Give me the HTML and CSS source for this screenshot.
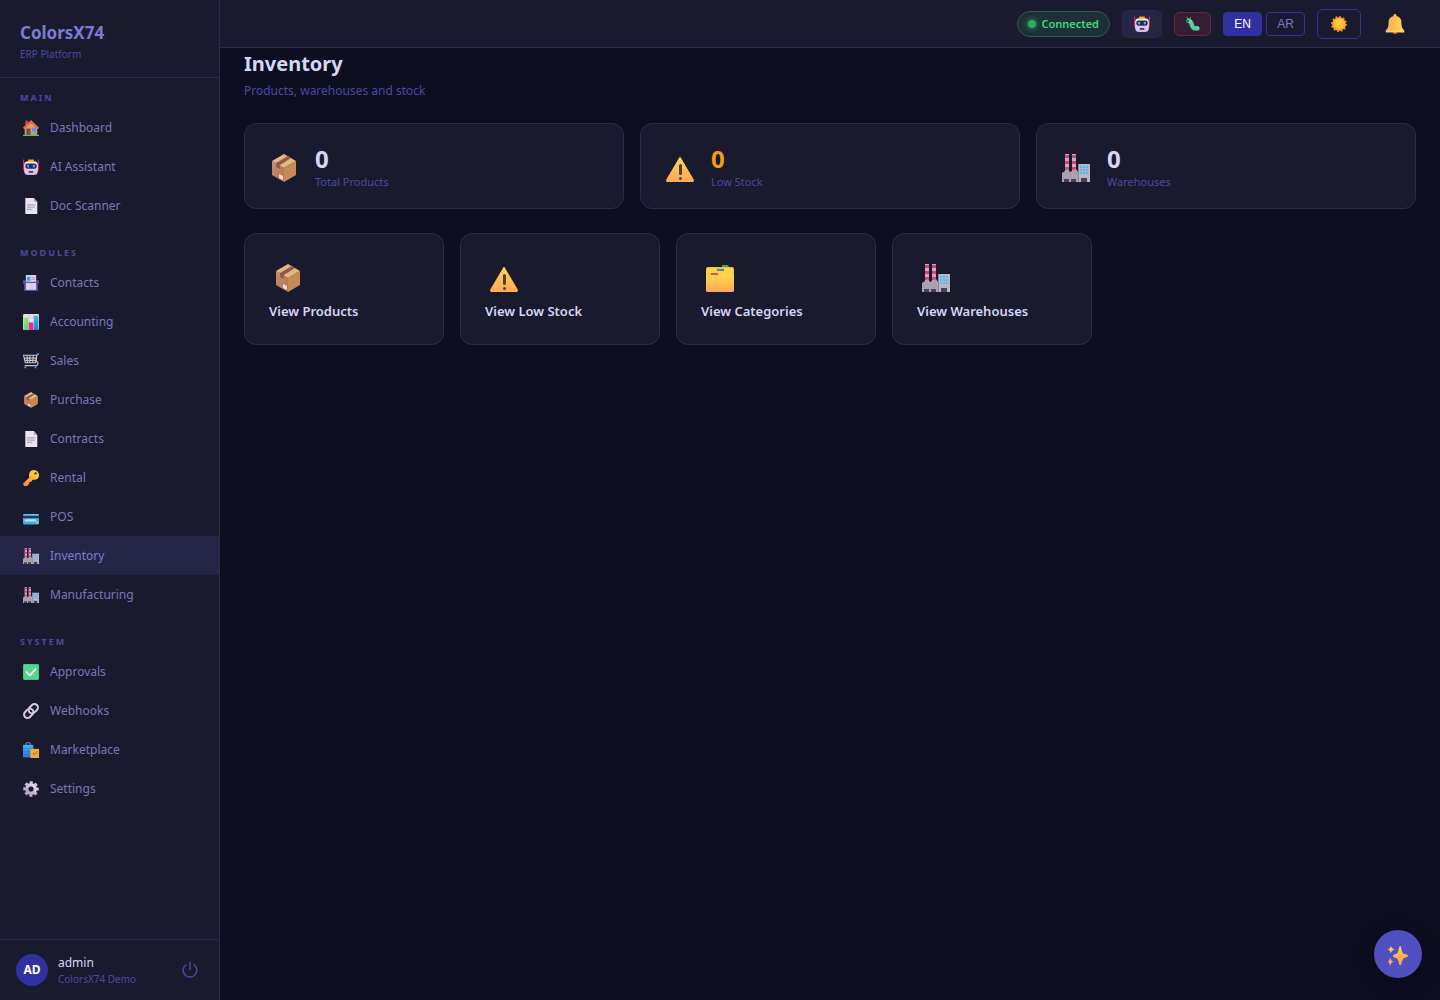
FILE: index.html
```html
<!DOCTYPE html>
<html lang="en">
<head>
<meta charset="utf-8">
<meta name="viewport" content="width=device-width, initial-scale=1">
<title>Inventory - ColorsX74</title>
<link rel="stylesheet" href="styles.css">
</head>
<body>
<svg class="sprite" aria-hidden="true">
  <defs>
    <linearGradient id="g-wall" x1="0" y1="0" x2="0" y2="1"><stop offset="0" stop-color="#dcb070"/><stop offset="1" stop-color="#c98e72"/></linearGradient>
    <linearGradient id="g-face" x1="0" y1="0" x2="0" y2="1"><stop offset="0" stop-color="#f4eef8"/><stop offset="1" stop-color="#d3b5ea"/></linearGradient>
    <linearGradient id="g-box" x1="0" y1="0" x2="1" y2="1"><stop offset="0" stop-color="#c78c72"/><stop offset="1" stop-color="#b97548"/></linearGradient>
    <linearGradient id="g-gold" x1="0" y1="0" x2="0" y2="1"><stop offset="0" stop-color="#ffd84f"/><stop offset="1" stop-color="#ffa757"/></linearGradient>
    <linearGradient id="g-key" x1="1" y1="0" x2="0" y2="1"><stop offset="0" stop-color="#ffe13c"/><stop offset="1" stop-color="#ff8148"/></linearGradient>
    <linearGradient id="g-bell" x1="0" y1="0" x2="1" y2="0"><stop offset="0" stop-color="#f9a85c"/><stop offset="1" stop-color="#ffd94c"/></linearGradient>
    <linearGradient id="g-blue" x1="0" y1="0" x2="0" y2="1"><stop offset="0" stop-color="#3db9ee"/><stop offset="1" stop-color="#2c78d8"/></linearGradient>
    <linearGradient id="g-green" x1="0" y1="0" x2="1" y2="1"><stop offset="0" stop-color="#a6e84c"/><stop offset="1" stop-color="#3ed59a"/></linearGradient>
    <linearGradient id="g-gear" x1="1" y1="0" x2="0" y2="1"><stop offset="0" stop-color="#e6e2ea"/><stop offset="1" stop-color="#b29bc6"/></linearGradient>
    <linearGradient id="g-spark" x1="0" y1="0" x2="0" y2="1"><stop offset="0" stop-color="#ffce4a"/><stop offset="1" stop-color="#ff9a63"/></linearGradient>
  </defs>
  <symbol id="i-house" viewBox="0 0 28 28">
    <path fill="#9b5a42" d="M4 1h5v9H4z"/><path fill="url(#g-wall)" d="M3 13 14 3l11 10v14H3z"/>
    <path fill="#f4643f" d="M14 0 0 13l2 3L14 6l12 10 2-3z"/><path fill="#7a4a48" d="M6 15h7v12H6z"/>
    <path fill="#31a5ef" d="M16 13h7v7h-7z"/><path fill="#45c96b" d="M0 26h28v2H0z"/>
  </symbol>
  <symbol id="i-robot" viewBox="0 0 28 28">
    <path fill="#e31f62" d="M0 1h2v8h3v12H2l-2-3zM28 1h-2v8h-3v12h3l2-3z"/>
    <rect x="2" y="4" width="24" height="24" rx="7" fill="url(#g-face)"/><path fill="#fbb51d" d="M9 1h10v4H9z"/>
    <rect x="4" y="8" width="20" height="9" rx="4" fill="#2d2552"/>
    <rect x="7" y="10" width="4" height="5" rx="2" fill="#2fb9f5"/><rect x="17" y="10" width="4" height="5" rx="2" fill="#2fb9f5"/>
    <rect x="10" y="21" width="8" height="3" rx="1" fill="#46385e"/>
  </symbol>
  <symbol id="i-doc" viewBox="0 0 28 28">
    <path fill="#ebe2f2" d="M4 0h15l6 7v21H4z"/><path fill="#b6a9c4" d="M19 0v7h6z"/>
    <path stroke="#b0a6ba" stroke-width="2" d="M7 12h14M7 16h14M7 20h9"/>
  </symbol>
  <symbol id="i-contacts" viewBox="0 0 28 28">
    <path fill="#6349a3" d="M0 9h28v6h-2v13H2V15H0z"/><path fill="#ddd2ea" d="M5 0h18v12H5z"/>
    <path fill="#3b9fec" d="M7 3h6v7H7z"/><path fill="#a99cb8" d="M15 4h6v1.500h-6zM15 7h6v1.500h-6z"/>
    <path fill="#dcd0e8" d="M5 14h18v12H5z"/><path fill="#6d5a94" d="M5 12h18v2H5z"/>
  </symbol>
  <symbol id="i-chart" viewBox="0 0 28 28">
    <rect width="28" height="28" rx="2" fill="#e4dfe8"/><path stroke="#c5bfcd" d="M0 7h28M0 14h28M10 0v28M19 0v28"/>
    <path fill="url(#g-green)" d="M1 7h8v21H1z"/><path fill="#e3326e" d="M10 15h8v13h-8z"/><path fill="url(#g-blue)" d="M19 3h8v25h-8z"/>
  </symbol>
  <symbol id="i-cart" viewBox="0 0 28 28">
    <path fill="none" stroke="#c6c3cc" stroke-width="2" d="M1 4h23l-2 13H4zM2 9h21M3 13h20M7 4l1 13M12 4v13M18 4l-1 13"/>
    <path fill="none" stroke="#c6c3cc" stroke-width="2" d="m24 3-1 12q4 0 3 4t-5 3H3"/><path stroke="#3d96df" stroke-width="3" d="M24 2h4"/>
    <circle cx="4" cy="25" r="2" fill="#438ed8"/><circle cx="22" cy="25" r="2" fill="#438ed8"/>
  </symbol>
  <symbol id="i-box" viewBox="0 0 28 28">
    <path fill="url(#g-box)" d="M2 7 14 14v14L2 21z"/><path fill="#c78a55" d="m26 7-12 7v14l12-7z"/>
    <path fill="#e2b67e" d="m14 0 12 7-12 7L2 7z"/><path fill="#8f5c4a" d="m18 2 3 2L10 11v4l-4-2v-4z"/><path fill="#e9d7e6" d="m9 20 4 2v4l-4-2z"/>
  </symbol>
  <symbol id="i-key" viewBox="0 0 28 28">
    <path fill="url(#g-key)" fill-rule="evenodd" d="M19 0a9 9 0 0 1 9 9c0 6-5 9-11 8l-3 4h-3v3L7 28H2l-2-4L11 13C9 6 13 0 19 0zm3 4a2 2 0 1 0 0 4 2 2 0 0 0 0-4z"/>
  </symbol>
  <symbol id="i-card" viewBox="0 0 28 28">
    <rect y="9" width="28" height="18" rx="2" fill="#39acec"/><path fill="#62d4ec" d="M1 9h26v2H1z"/><path fill="#26354f" d="M0 12h28v4H0z"/>
    <path fill="#d0dce8" d="M3 18h20v4H3z"/><path fill="#f3c53b" d="M23 22h4v3h-4z"/>
  </symbol>
  <symbol id="i-factory" viewBox="0 0 28 28">
    <path fill="#bdb3c3" d="M3 0h4v20H3zM10 0h4v20h-4z"/><path fill="#df3c70" d="M3 1h4v3H3zM3 7h4v3H3zM3 13h4v3H3zM10 1h4v3h-4zM10 7h4v3h-4zM10 13h4v3h-4z"/>
    <path fill="#aaa0af" d="M0 19l6-4 2 3 6-3 2 3v10H0z"/><path fill="#bab6c4" d="M16 10h12v18H16z"/><path fill="#8f8799" d="M16 10h1v18h-1z"/>
    <path fill="#48bdf7" d="M18 12h2v2h-2zM21 12h2v2h-2zM24 12h2v2h-2zM18 15h2v2h-2zM21 15h2v2h-2zM24 15h2v2h-2zM18 18h2v2h-2zM21 18h2v2h-2zM24 18h2v2h-2z"/>
    <path fill="#4a3e58" d="M2 25h5v3H2zM9 25h5v3H9zM19 24h6v4h-6z"/>
  </symbol>
  <symbol id="i-check" viewBox="0 0 28 28">
    <rect width="28" height="28" rx="2" fill="#42b978"/><rect x="1" y="1" width="26" height="26" rx="2" fill="#54d58b"/>
    <path fill="none" stroke="#fff" stroke-width="3" stroke-linecap="round" stroke-linejoin="round" d="m6 14 6 6L22 9"/>
  </symbol>
  <symbol id="i-link" viewBox="0 0 28 28">
    <g fill="none" stroke="#d4ccdc" stroke-width="3.500"><rect x="9" y="4" width="18" height="12" rx="6" transform="rotate(-45 18 10)"/><rect x="1" y="12" width="18" height="12" rx="6" transform="rotate(-45 10 18)"/></g>
  </symbol>
  <symbol id="i-bags" viewBox="0 0 28 28">
    <path fill="none" stroke="#318ab2" stroke-width="2" d="M5 7V4c0-4 8-4 8 0v3"/><path fill="url(#g-blue)" d="M0 5h18v22H0z"/>
    <path stroke="#2870bf" d="M0 12h18M0 17h18M0 22h18"/><path fill="#f5a83c" d="M13 12h15v16H13z"/><path fill="none" stroke="#d7662d" stroke-width="2" d="M18 19c1 4 6 2 6-3"/>
  </symbol>
  <symbol id="i-gear" viewBox="0 0 28 28">
    <g fill="none" stroke="url(#g-gear)"><circle cx="14" cy="14" r="7.500" stroke-width="6"/><circle cx="14" cy="14" r="11.500" stroke-width="4" stroke-dasharray="5.400 3.630" stroke-dashoffset="2.700"/></g>
  </symbol>
  <symbol id="i-warning" viewBox="0 0 28 28">
    <path fill="url(#g-gold)" d="M13 4q1-2 2 0l13 22q0 2-1 2H1q-1 0-1-2z"/><rect x="13" y="10" width="3" height="11" rx="1.500" fill="#4b4047"/><circle cx="14.500" cy="24.500" r="1.500" fill="#4b4047"/>
  </symbol>
  <symbol id="i-files" viewBox="0 0 28 28">
    <path fill="#36a866" d="M16 2q0-1 1-1h5l1 2v3h-7z"/><rect y="3" width="28" height="25" rx="2" fill="#f9bd38"/><path fill="#ffd34a" d="M1 4h9v2h8V4h9v7H1z"/>
    <path fill="#3a8bc9" d="M11 5h7v2h-7z"/><path fill="#e9484e" d="M5 9h7v2H5z"/><rect y="11" width="28" height="17" rx="2" fill="url(#g-gold)"/>
  </symbol>
  <symbol id="i-bug" viewBox="0 0 28 28">
    <path fill="none" stroke="#3fae88" stroke-width="9" stroke-linecap="round" d="M5 8c9 0 4 14 13 15h5"/>
    <path fill="none" stroke="#5cd8a8" stroke-width="7" stroke-linecap="round" d="M5 7c9 0 4 14 13 15h5"/>
    <path fill="none" stroke="#45b58c" stroke-width="1.500" d="m8 15 6-3M11 21l5-5M18 25l1-7"/>
    <path fill="none" stroke="#4bb68d" stroke-width="2" d="M4 4 2 0M8 4l1-4"/><circle cx="4" cy="8" r="1.800" fill="#17353b"/>
  </symbol>
  <symbol id="i-sun" viewBox="0 0 28 28">
    <circle cx="14" cy="14" r="12" fill="none" stroke="#f08227" stroke-width="4" stroke-dasharray="3.140 3.140"/><circle cx="14" cy="14" r="12" fill="#f7a52b"/><circle cx="15" cy="13" r="9" fill="#fcc53c"/>
  </symbol>
  <symbol id="i-bell" viewBox="0 0 28 28">
    <circle cx="14" cy="24.500" r="3.500" fill="#d65f58"/><path fill="url(#g-bell)" d="M12 3V1q2-2 4 0v2c6 1 7 5 7 10 0 6 2 8 4 10v3H1v-3c2-2 4-4 4-10C5 8 6 4 12 3z"/><path fill="#ffd75d" d="M2 23h24v2H2z"/>
  </symbol>
  <symbol id="i-sparkles" viewBox="0 0 28 28">
    <path fill="url(#g-spark)" d="M17 0c2 0 2 10 5 11s6 1 6 3-4 2-6 3-3 10-5 10-2-9-5-10-5-1-5-3 2-2 5-3 3-11 5-11z"/>
    <path fill="url(#g-spark)" d="M4 0q1 4 5 5-4 1-5 5-1-4-4-5 3-1 4-5zM3 16q1 5 5 6-4 1-5 6-1-5-3-6 2-1 3-6z"/>
  </symbol>
  <symbol id="i-power" viewBox="0 0 28 28">
    <path fill="none" stroke="currentColor" stroke-width="2.500" d="M8 4a12 12 0 1 0 12 0M14 0v14"/>
  </symbol>
</svg>
<div class="app">
  <aside class="sidebar">
    <div class="brand">
      <div class="brand-name">ColorsX74</div>
      <div class="brand-sub">ERP Platform</div>
    </div>
    <nav class="nav">
      <section class="nav-group">
        <h2 class="nav-label">MAIN</h2>
        <a class="nav-item" href="#"><svg class="icon"><use href="#i-house"/></svg>Dashboard</a>
        <a class="nav-item" href="#"><svg class="icon"><use href="#i-robot"/></svg>AI Assistant</a>
        <a class="nav-item" href="#"><svg class="icon"><use href="#i-doc"/></svg>Doc Scanner</a>
      </section>
      <section class="nav-group">
        <h2 class="nav-label">MODULES</h2>
        <a class="nav-item" href="#"><svg class="icon"><use href="#i-contacts"/></svg>Contacts</a>
        <a class="nav-item" href="#"><svg class="icon"><use href="#i-chart"/></svg>Accounting</a>
        <a class="nav-item" href="#"><svg class="icon"><use href="#i-cart"/></svg>Sales</a>
        <a class="nav-item" href="#"><svg class="icon"><use href="#i-box"/></svg>Purchase</a>
        <a class="nav-item" href="#"><svg class="icon"><use href="#i-doc"/></svg>Contracts</a>
        <a class="nav-item" href="#"><svg class="icon"><use href="#i-key"/></svg>Rental</a>
        <a class="nav-item" href="#"><svg class="icon"><use href="#i-card"/></svg>POS</a>
        <a class="nav-item active" href="#" aria-current="page"><svg class="icon"><use href="#i-factory"/></svg>Inventory</a>
        <a class="nav-item" href="#"><svg class="icon"><use href="#i-factory"/></svg>Manufacturing</a>
      </section>
      <section class="nav-group">
        <h2 class="nav-label">SYSTEM</h2>
        <a class="nav-item" href="#"><svg class="icon"><use href="#i-check"/></svg>Approvals</a>
        <a class="nav-item" href="#"><svg class="icon"><use href="#i-link"/></svg>Webhooks</a>
        <a class="nav-item" href="#"><svg class="icon"><use href="#i-bags"/></svg>Marketplace</a>
        <a class="nav-item" href="#"><svg class="icon"><use href="#i-gear"/></svg>Settings</a>
      </section>
    </nav>
    <div class="user">
      <div class="avatar">AD</div>
      <div class="user-info">
        <div class="user-name">admin</div>
        <div class="user-org">ColorsX74 Demo</div>
      </div>
      <button class="logout" aria-label="Log out"><svg class="icon"><use href="#i-power"/></svg></button>
    </div>
  </aside>
  <div class="page">
    <header class="topbar">
      <span class="status"><span class="status-dot"></span>Connected</span>
      <button class="tool tool-ai" aria-label="AI assistant"><svg class="icon"><use href="#i-robot"/></svg></button>
      <button class="tool tool-bug" aria-label="Report a bug"><svg class="icon"><use href="#i-bug"/></svg></button>
      <div class="langs">
        <button class="lang selected">EN</button>
        <button class="lang">AR</button>
      </div>
      <button class="tool tool-theme" aria-label="Switch theme"><svg class="icon"><use href="#i-sun"/></svg></button>
      <button class="tool tool-bell" aria-label="Notifications"><svg class="icon"><use href="#i-bell"/></svg></button>
    </header>
    <main class="content">
      <h1 class="title">Inventory</h1>
      <p class="subtitle">Products, warehouses and stock</p>
      <div class="stats">
        <div class="card stat"><svg class="icon-lg"><use href="#i-box"/></svg><div><div class="stat-value">0</div><div class="stat-label">Total Products</div></div></div>
        <div class="card stat"><svg class="icon-lg"><use href="#i-warning"/></svg><div><div class="stat-value warn">0</div><div class="stat-label">Low Stock</div></div></div>
        <div class="card stat"><svg class="icon-lg"><use href="#i-factory"/></svg><div><div class="stat-value">0</div><div class="stat-label">Warehouses</div></div></div>
      </div>
      <div class="actions">
        <a class="card action" href="#"><svg class="icon-lg"><use href="#i-box"/></svg>View Products</a>
        <a class="card action" href="#"><svg class="icon-lg"><use href="#i-warning"/></svg>View Low Stock</a>
        <a class="card action" href="#"><svg class="icon-lg"><use href="#i-files"/></svg>View Categories</a>
        <a class="card action" href="#"><svg class="icon-lg"><use href="#i-factory"/></svg>View Warehouses</a>
      </div>
    </main>
  </div>
</div>
<button class="fab" aria-label="Open assistant"><svg class="icon-fab"><use href="#i-sparkles"/></svg></button>
</body>
</html>
```
FILE: styles.css
```css
:root {
  --bg: #0e0e21;
  --panel: #1a1a2e;
  --line: #2a2a4a;
  --accent: #3030a0;
  --muted: #4a4aa0;
  --text: #d6d6f5;
}
* { box-sizing: border-box; }
body {
  margin: 0;
  background: var(--bg);
  color: var(--text);
  font: 12px/18px "Segoe UI", "Noto Sans", sans-serif;
}
button { margin: 0; padding: 0; font: inherit; cursor: pointer; }
a { color: inherit; text-decoration: none; }
.sprite { position: absolute; width: 0; height: 0; }
.icon { display: block; flex: none; width: 16px; height: 16px; }
.icon-lg { display: block; flex: none; width: 28px; height: 28px; }

.app { display: flex; min-height: 100vh; }
.sidebar {
  display: flex;
  flex-direction: column;
  flex: none;
  width: 220px;
  background: var(--panel);
  border-right: 1px solid var(--line);
}
.brand { padding: 20px 20px 14px; border-bottom: 1px solid var(--line); }
.brand-name { color: #7c7cd8; font-size: 17px; font-weight: 700; line-height: 25px; }
.brand-sub { color: var(--muted); font-size: 10px; line-height: 18px; }
.nav { display: flex; flex-direction: column; flex: 1; gap: 8px; }
.nav-label {
  margin: 0;
  padding: 12px 20px 3px;
  color: var(--muted);
  font-size: 9px;
  font-weight: 700;
  line-height: 15px;
  letter-spacing: 2px;
}
.nav-item {
  display: flex;
  align-items: center;
  gap: 11px;
  height: 39px;
  padding: 0 23px;
  color: #7878b4;
}
.nav-item.active { background: #252545; color: #7c7cd8; }
.user {
  display: flex;
  align-items: center;
  gap: 10px;
  padding: 14px 16px;
  border-top: 1px solid var(--line);
}
.avatar {
  display: grid;
  place-items: center;
  width: 32px;
  height: 32px;
  border-radius: 50%;
  background: var(--accent);
  color: #fff;
  font-weight: 700;
}
.user-info { flex: 1; }
.user-name { line-height: 18px; }
.user-org { color: var(--muted); font-size: 10px; line-height: 14px; }
.logout { padding: 5px; border: 0; background: none; color: var(--muted); }

.page { flex: 1; min-width: 0; }
.topbar {
  display: flex;
  align-items: center;
  justify-content: flex-end;
  gap: 12px;
  height: 48px;
  padding: 0 24px;
  background: var(--panel);
  border-bottom: 1px solid var(--line);
}
.status {
  display: flex;
  align-items: center;
  gap: 5px;
  height: 26px;
  padding: 0 10px;
  border: 1px solid #266248;
  border-radius: 13px;
  background: #1d3038;
  color: #3bdc7a;
  font-size: 11px;
  font-weight: 600;
}
.status-dot { width: 8px; height: 8px; border-radius: 50%; background: #30a865; box-shadow: 0 0 6px #30a865; }
.tool { display: grid; place-items: center; border: 1px solid; border-radius: 6px; }
.tool-ai { width: 40px; height: 28px; border-color: #2a2a4a; background: #252545; }
.tool-bug { width: 37px; height: 24px; border-color: #6d2638; background: #351e31; }
.tool-bug .icon { width: 14px; height: 14px; }
.tool-theme { width: 44px; height: 30px; border-color: var(--accent); background: none; }
.tool-bell { width: 43px; height: 30px; border-color: transparent; background: none; }
.tool-bell .icon { width: 20px; height: 20px; }
.langs { display: flex; gap: 4px; }
.lang {
  width: 39px;
  height: 24px;
  border: 1px solid var(--accent);
  border-radius: 4px;
  background: none;
  color: #7878c8;
  font: 12px "Liberation Sans", Arial, sans-serif;
}
.lang.selected { background: var(--accent); color: #fff; }

.content { padding: 0 24px 24px; }
.title { margin: 0; font-size: 20px; font-weight: 700; line-height: 32px; }
.subtitle { margin: 0 0 22px; padding-top: 1px; color: var(--muted); line-height: 20px; }
.card { border: 1px solid var(--line); border-radius: 12px; background: var(--panel); }
.stats { display: grid; grid-template-columns: repeat(3, 1fr); gap: 16px; margin-bottom: 24px; }
.stat { display: flex; align-items: center; gap: 17px; height: 86px; padding: 4px 25px 0; }
.stat-value { font-size: 24px; font-weight: 700; line-height: 28px; }
.stat-value.warn { color: #f59e0b; }
.stat-label { color: var(--muted); font-size: 11px; }
.actions { display: grid; grid-template-columns: repeat(auto-fill, 200px); gap: 16px; }
.action {
  display: flex;
  flex-direction: column;
  gap: 10px;
  padding: 30px 24px 24px;
  font-size: 13px;
  font-weight: 600;
}
.action .icon-lg { margin-left: 5px; }

.fab {
  position: fixed;
  right: 18px;
  bottom: 22px;
  display: grid;
  place-items: center;
  width: 48px;
  height: 48px;
  padding-top: 4px;
  border: 0;
  border-radius: 50%;
  background: #5050c0;
  box-shadow: 0 4px 20px rgba(0, 0, 0, .4);
}
.icon-fab { width: 20px; height: 20px; }
```
